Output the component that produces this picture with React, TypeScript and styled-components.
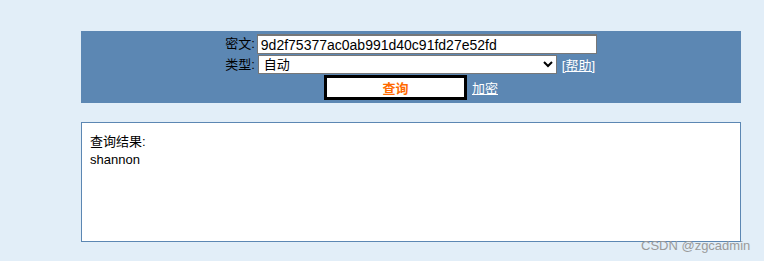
import React from 'react';
import styled, { createGlobalStyle } from 'styled-components';

const GlobalStyle = createGlobalStyle`
	html, body {
		margin: 0;
		padding: 0;
		background-color: #e2eef8;
		font-family: 'Liberation Sans', 'Noto Sans CJK SC', sans-serif;
		font-size: 13px;
		color: #000;
	}
`;

const Page = styled.div`
	position: relative;
	width: 764px;
	height: 261px;
	overflow: hidden;
	padding: 31px 0 0 81px;
	box-sizing: border-box;
`;

const Panel = styled.form`
	width: 660px;
	box-sizing: border-box;
	background-color: #5c87b3;
	padding: 3px 0 3px;
	display: grid;
	grid-template-columns: auto auto;
	justify-content: center;
	align-items: center;
	row-gap: 1px;
`;

const Label = styled.label`
	text-align: right;
	padding-right: 2px;
	line-height: 18px;
`;

const TextInput = styled.input`
	width: 340px;
	height: 20px;
	box-sizing: border-box;
	border: 1px solid #777;
	border-top-width: 2px;
	padding: 0 3px;
	font-family: 'Liberation Sans', 'Noto Sans CJK SC', sans-serif;
	font-size: 14px;
	background: #fff;
	outline: none;
`;

const SelectRow = styled.div`
	display: flex;
	align-items: center;
	gap: 5px;
	padding-left: 1px;
`;

const Select = styled.select`
	width: 299px;
	height: 19px;
	box-sizing: border-box;
	border: 1px solid #777;
	padding: 0 1px;
	font-family: 'Liberation Sans', 'Noto Sans CJK SC', sans-serif;
	font-size: 13px;
	background: #fff;
	border-radius: 0;
`;

const Link = styled.a`
	color: #fff;
	text-decoration: underline;
	font-size: 13px;
`;

const ActionRow = styled.div`
	grid-column: 1 / span 2;
	display: flex;
	justify-content: center;
	align-items: center;
	gap: 5px;
`;

const QueryButton = styled.button`
	width: 143px;
	height: 25px;
	box-sizing: border-box;
	background: #fff;
	border: 3px solid #000;
	color: #ff6a00;
	font-weight: bold;
	font-family: 'Liberation Sans', 'Noto Sans CJK SC', sans-serif;
	font-size: 13px;
	padding: 0;
`;

const ResultBox = styled.div`
	margin-top: 19px;
	width: 660px;
	height: 120px;
	box-sizing: border-box;
	border: 1px solid #5c87b3;
	background: #fff;
	padding: 10px 8px;
	line-height: 18px;
`;

const Watermark = styled.span`
	position: absolute;
	left: 641px;
	top: 238px;
	font-size: 13px;
	color: #9a9a9a;
	font-family: 'Liberation Sans', 'Noto Sans', sans-serif;
`;

const App = () => {
	return (
		<>
			<GlobalStyle />
			<Page>
				<Panel onSubmit={(e) => e.preventDefault()}>
					<Label>密文:</Label>
					<TextInput defaultValue="9d2f75377ac0ab991d40c91fd27e52fd" />
					<Label>类型:</Label>
					<SelectRow>
						<Select defaultValue="auto">
							<option value="auto">自动</option>
						</Select>
						<Link href="#">[帮助]</Link>
					</SelectRow>
					<ActionRow>
						<QueryButton type="submit">查询</QueryButton>
						<Link href="#">加密</Link>
					</ActionRow>
				</Panel>
				<ResultBox>
					查询结果:
					<br />
					shannon
				</ResultBox>
				<Watermark>CSDN @zgcadmin</Watermark>
			</Page>
		</>
	);
};

export default App;
